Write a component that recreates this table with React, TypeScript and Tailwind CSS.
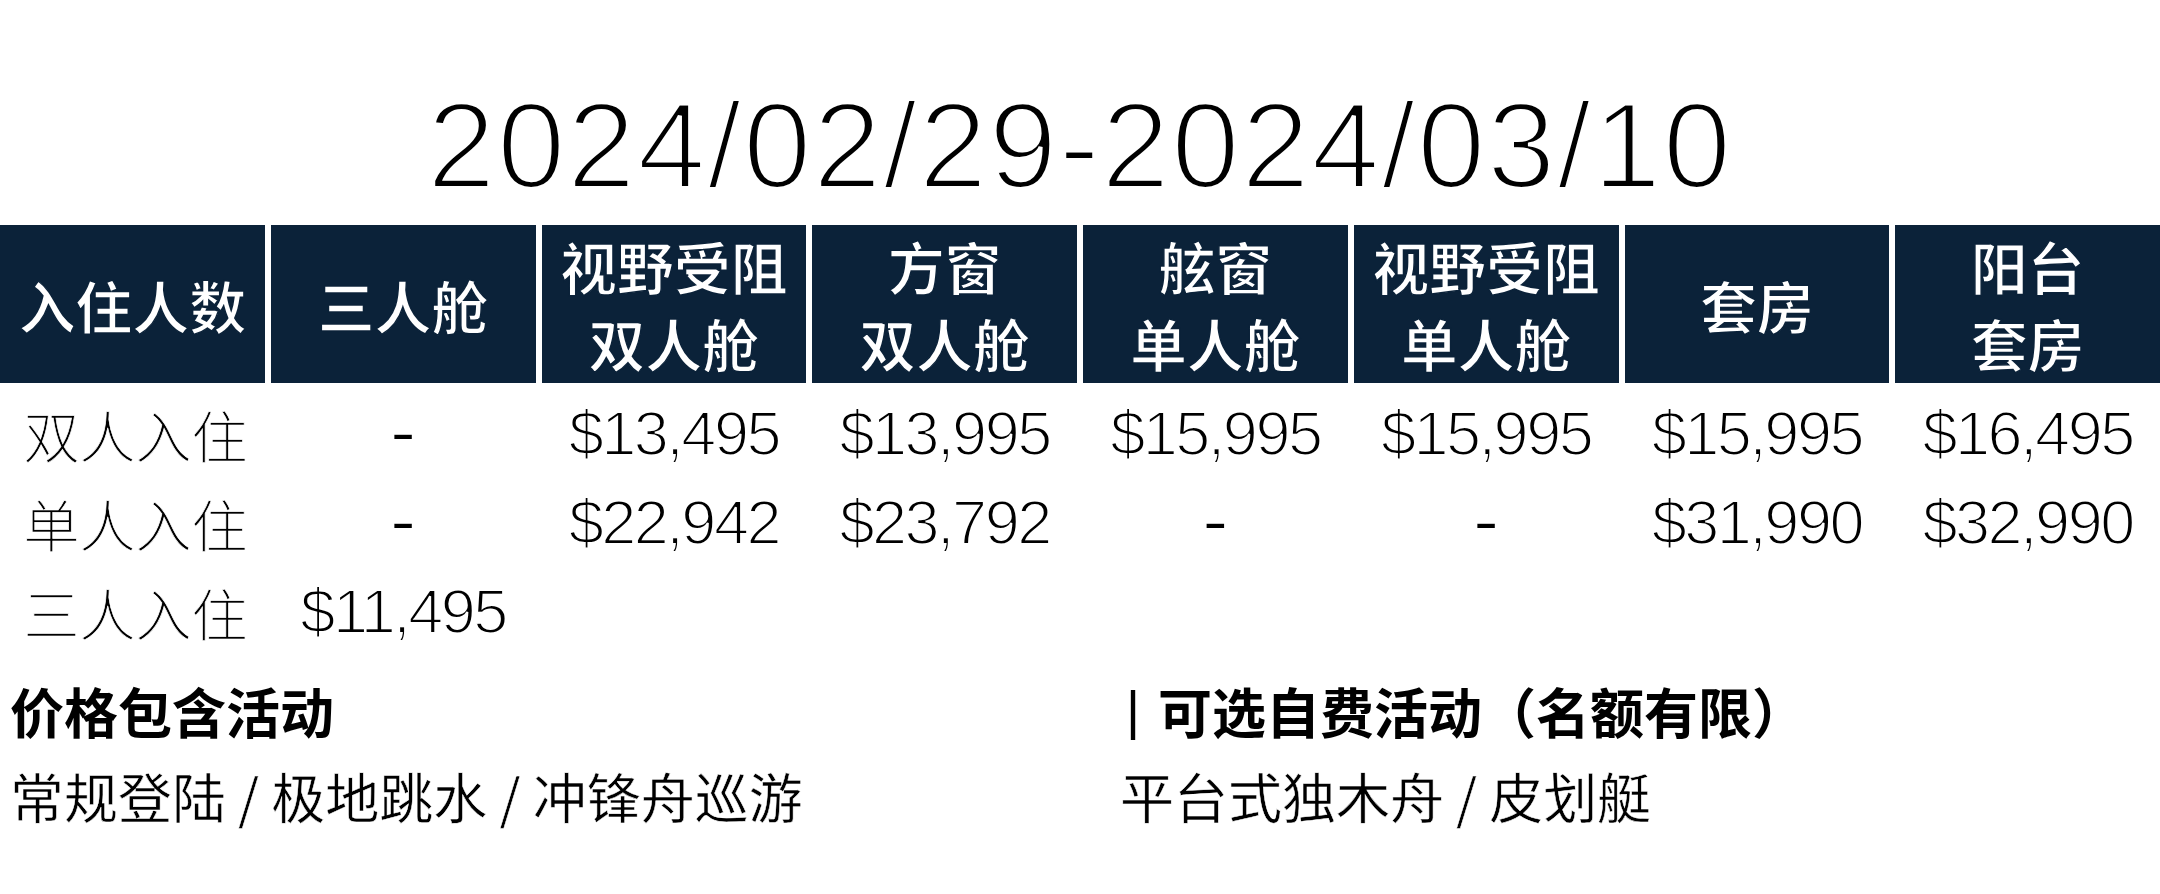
import React from "react";

const headers: string[][] = [
  ["入住人数"],
  ["三人舱"],
  ["视野受阻", "双人舱"],
  ["方窗", "双人舱"],
  ["舷窗", "单人舱"],
  ["视野受阻", "单人舱"],
  ["套房"],
  ["阳台", "套房"],
];

const rows: string[][] = [
  ["双人入住", "-", "$13,495", "$13,995", "$15,995", "$15,995", "$15,995", "$16,495"],
  ["单人入住", "-", "$22,942", "$23,792", "-", "-", "$31,990", "$32,990"],
  ["三人入住", "$11,495", "", "", "", "", "", ""],
];

export default function App() {
  return (
    <div className="w-[2160px] h-[894px] bg-white overflow-hidden text-black">
      <div className="pt-[87px]">
        <div className="h-[118px] text-center text-[123px] leading-[118px] tracking-[1.6px] font-['Liberation_Sans',sans-serif] [-webkit-text-stroke:4px_white]">
          2024/02/29-2024/03/10
        </div>
      </div>

      <div className="mt-[20px] grid grid-cols-8 gap-x-[6px]">
        {headers.map((lines, i) => (
          <div
            key={i}
            className="h-[158px] bg-[#0b2239] flex flex-col items-center justify-center text-white text-[57px] leading-[77px] font-bold font-['Noto_Sans_CJK_SC',sans-serif] [-webkit-text-stroke:1.5px_#0b2239]"
          >
            {lines.map((l, j) => (
              <div key={j}>{l}</div>
            ))}
          </div>
        ))}
      </div>

      <div className="mt-[6px]">
        {rows.map((r, i) => (
          <div key={i} className="grid grid-cols-8 gap-x-[6px] h-[89px]">
            {r.map((c, j) =>
              j === 0 ? (
                <div
                  key={j}
                  className="flex items-center justify-center pl-[6px] text-[56px] leading-none font-['Noto_Sans_CJK_SC',sans-serif] font-light [-webkit-text-stroke:0.7px_white]"
                >
                  {c}
                </div>
              ) : c === "-" ? (
                <div
                  key={j}
                  className="flex items-center justify-center pb-[6px] text-[80px] leading-none font-['Liberation_Sans',sans-serif] [-webkit-text-stroke:2px_white]"
                >
                  {c}
                </div>
              ) : (
                <div
                  key={j}
                  className="flex items-center justify-center text-[63px] leading-none tracking-[-2.5px] font-['Liberation_Sans',sans-serif] [-webkit-text-stroke:2px_white]"
                >
                  {c}
                </div>
              )
            )}
          </div>
        ))}
      </div>

      <div className="mt-[12px] flex pl-[10px] font-['Noto_Sans_CJK_SC',sans-serif] text-[54px] leading-[85px]">
        <div className="w-[1110px]">
          <div className="font-bold">价格包含活动</div>
          <div className="font-normal [-webkit-text-stroke:0.5px_white]">常规登陆 / 极地跳水 / 冲锋舟巡游</div>
        </div>
        <div>
          <div className="flex items-center">
            <span className="pl-[6px] font-['Liberation_Sans',sans-serif] font-normal">|</span>
            <span className="ml-[18px] font-bold">可选自费活动（名额有限）</span>
          </div>
          <div className="font-normal [-webkit-text-stroke:0.5px_white]">平台式独木舟 / 皮划艇</div>
        </div>
      </div>
    </div>
  );
}
